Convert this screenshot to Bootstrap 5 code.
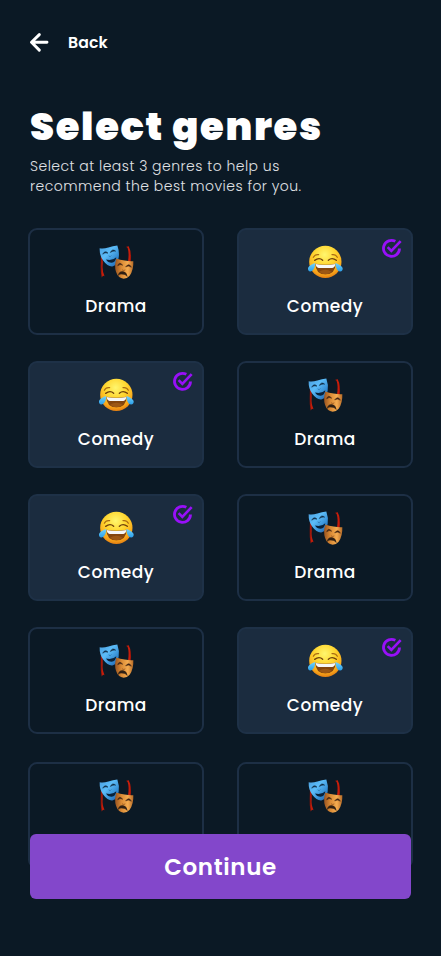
<!DOCTYPE html>
<html lang="en">
<head>
<meta charset="utf-8">
<meta name="viewport" content="width=device-width, initial-scale=1">
<title>Select genres</title>
<link href="https://cdn.jsdelivr.net/npm/bootstrap@5.3.0/dist/css/bootstrap.min.css" rel="stylesheet">
<style>
body{background:#0b1925;color:#fff;font-family:Poppins,Inter,sans-serif;overflow:hidden}
.screen{height:956px;padding:0 28px;overflow:hidden}
.back-link{padding:30px 0 0 1px;height:55px;gap:19px;font-size:15.7px;font-weight:600;line-height:25px;letter-spacing:.15px}
.headline{margin:49px 0 0 2px;font-size:38.5px;font-weight:900;line-height:46px;letter-spacing:1.65px}
.intro{margin:6px 0 0 2px;font-size:14px;line-height:20px;letter-spacing:.47px;color:#e0e2e5;font-weight:300}
.genres{margin-top:32px;display:grid;grid-template-columns:176px 176px;column-gap:33px;grid-template-rows:133px 133px 133px 135px 107px}
.genre{height:107px;border:2px solid #1d2f45;border-radius:9px;background:transparent;color:#fff;padding:13px 0 0}
.genre.picked{background:#1b2c3f;border-color:#1e3147}
.genre-name{margin-top:15px;font-size:17px;font-weight:500;line-height:24px;letter-spacing:.45px}
.tick{right:7px;top:6px}
.continue-btn{margin:-35px 0 0 2px;width:381px;height:65px;border:0;border-radius:6px;background:#8347cb;color:#fff;font-size:23px;font-weight:600;letter-spacing:.65px;padding:2px 0 0}
.continue-btn:hover{background:#8347cb;color:#fff}
</style>
</head>
<body>
<svg width="0" height="0" class="position-absolute" aria-hidden="true">
<defs>
<linearGradient id="blue" x1="0" y1="0" x2="1" y2="1"><stop offset="0" stop-color="#4a9fe0"/><stop offset=".4" stop-color="#5cbcf8"/><stop offset=".75" stop-color="#3087cf"/><stop offset="1" stop-color="#3a5a9a"/></linearGradient>
<linearGradient id="gold" x1="0" y1="0" x2="1" y2="0"><stop offset="0" stop-color="#9a5420"/><stop offset=".35" stop-color="#d98a35"/><stop offset=".7" stop-color="#f5ac50"/><stop offset="1" stop-color="#b56a28"/></linearGradient>
<linearGradient id="ribbon" x1="0" y1="0" x2="1" y2="0"><stop offset="0" stop-color="#7e1109"/><stop offset=".6" stop-color="#d7200b"/><stop offset="1" stop-color="#8f1208"/></linearGradient>
<radialGradient id="face" cx=".48" cy=".28" r=".75"><stop offset="0" stop-color="#fff66e"/><stop offset=".45" stop-color="#ffd52e"/><stop offset=".8" stop-color="#f9a51a"/><stop offset="1" stop-color="#dc7410"/></radialGradient>
<linearGradient id="tear" x1="0" y1="0" x2="0" y2="1"><stop offset="0" stop-color="#74d4fb"/><stop offset="1" stop-color="#2b9fea"/></linearGradient>
<symbol id="masks" viewBox="39 22.500 108 108">
<path d="M48 55Q55 70 53 88Q51 107 59 122L54 121L50 126Q46 106 47 88Z" fill="url(#ribbon)"/>
<path d="M123 34L131 32Q141 50 137 80L129 78Q133 52 128 38Z" fill="url(#ribbon)"/>
<path d="M44 38Q54 41 70 36Q84 32 97 30Q104 49 101 67Q97 89 82 93Q68 94 55 76Q43 60 44 38Z" fill="url(#blue)"/>
<path d="M53 56Q60 43 69 53Q60 50 53 56ZM76 51Q82 38 92 47Q83 45 76 51Z" fill="#102b43" stroke="#102b43" stroke-width="1.5"/>
<path d="M71 61Q76 67 79 60" fill="none" stroke="#28699b" stroke-width="2"/>
<path d="M63 72Q82 77 94 65Q92 80 80 82Q69 82 63 72Z" fill="#092139"/>
<path d="M94 69Q105 73 119 75Q134 78 145 77Q146 103 134 121Q126 130 116 130Q99 128 93 109Q87 90 94 69Z" fill="url(#gold)"/>
<path d="M98 91Q102 77 113 89Q105 84 98 91ZM122 94Q132 81 139 95Q131 89 122 94Z" fill="#402414" stroke="#402414" stroke-width="1.7"/>
<path d="M111 103Q117 107 121 103" fill="none" stroke="#884817" stroke-width="2"/>
<path d="M99 120Q103 106 114 108Q125 110 127 123Q120 115 112 116Q104 114 99 120Z" fill="#302014" stroke="#302014" stroke-width="1.2"/>
</symbol>
<symbol id="joy" viewBox="36 24 108 108">
<circle cx="91" cy="80.500" r="48.500" fill="url(#face)"/>
<path d="M55 67Q60 57 71 59M111 59Q122 57 127 67" fill="none" stroke="#aa6b13" stroke-width="3.500" stroke-linecap="round"/>
<path d="M59 76Q73 66 83 76M100 76Q111 66 124 76" fill="none" stroke="#70400b" stroke-width="4" stroke-linecap="round"/>
<path d="M61 86Q91 92 122 86Q121 118 91 118Q62 118 61 86Z" fill="#83450e"/>
<path d="M62 87Q91 93 121 87Q120 98 112 99H71Q63 98 62 87Z" fill="#f5f7f8"/>
<path d="M72 110Q91 99 110 110Q91 125 72 110Z" fill="#9c5714"/>
<path d="M61 84Q60 104 49 109Q38 111 39 99Q43 90 61 84ZM121 84Q122 104 132 109Q144 111 143 99Q138 90 121 84Z" fill="url(#tear)"/>
</symbol>
<symbol id="tick" viewBox="12 10.500 72 72">
<path d="M58 26.500A24 24 0 1 0 70.500 48" fill="none" stroke="#9810f8" stroke-width="8.500"/>
<path d="M35 44L46 55L74 26" fill="none" stroke="#9810f8" stroke-width="8"/>
</symbol>
</defs>
</svg>
<main class="screen">
<nav class="back-link d-flex align-items-center">
<svg width="20" height="20" viewBox="0 0 20 20" fill="none" stroke="#fff" stroke-width="2.900" stroke-linecap="round" stroke-linejoin="round"><path d="M10.300 1.600L2.500 9.300L10.300 17.100M2.800 9.300H18"/></svg>
<span>Back</span>
</nav>
<h1 class="headline text-nowrap">Select genres</h1>
<p class="intro text-nowrap">Select at least 3 genres to help us<br>recommend the best movies for you.</p>
<section class="genres" id="genres"></section>
<button class="btn continue-btn position-relative d-block" type="button">Continue</button>
</main>
<script src="https://cdn.jsdelivr.net/npm/bootstrap@5.3.0/dist/js/bootstrap.bundle.min.js"></script>
<script>
const picks = [0, 1, 1, 0, 1, 0, 0, 1, 0, 0];
document.getElementById('genres').innerHTML = picks.map(p => `
<div class="genre position-relative d-flex flex-column align-items-center ${p ? 'picked' : ''}">
<svg width="36" height="36"><use href="#${p ? 'joy' : 'masks'}"/></svg>
<div class="genre-name">${p ? 'Comedy' : 'Drama'}</div>
${p ? '<svg class="tick position-absolute" width="24" height="24"><use href="#tick"/></svg>' : ''}
</div>`).join('');
</script>
</body>
</html>
